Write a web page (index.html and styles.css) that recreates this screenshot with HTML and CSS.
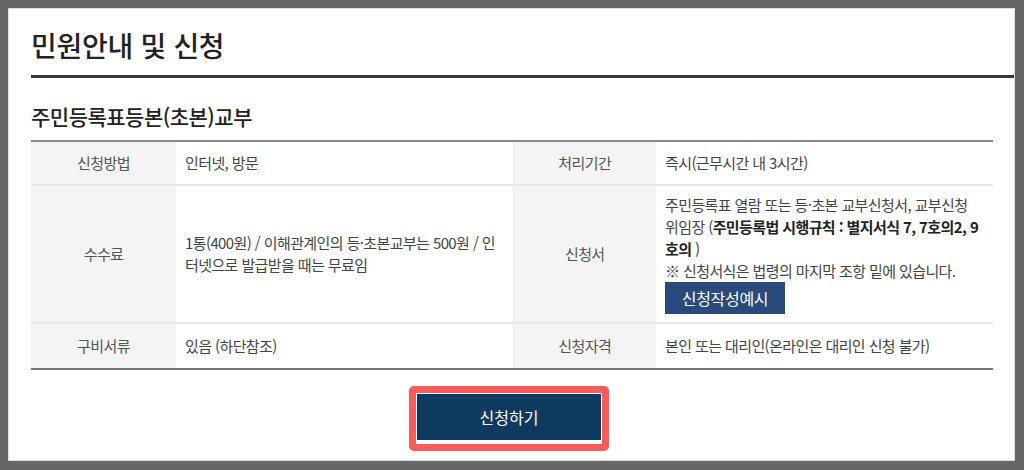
FILE: index.html
```html
<!DOCTYPE html>
<html lang="ko">
<head>
  <meta charset="UTF-8" />
  <meta name="viewport" content="width=device-width, initial-scale=1.0" />
  <title>민원안내 및 신청</title>
  <link rel="stylesheet" href="styles.css">
</head>
<body>
  <div class="panel">
    <h1 class="page-title">민원안내 및 신청</h1>

    <div class="content">
      <h2 class="service-title">주민등록표등본(초본)교부</h2>

      <table class="info-table">
        <colgroup>
          <col class="col-th" />
          <col class="col-td" />
          <col class="col-th2" />
          <col class="col-td" />
        </colgroup>
        <tr>
          <th>신청방법</th>
          <td>인터넷, 방문</td>
          <th>처리기간</th>
          <td>즉시(근무시간 내 3시간)</td>
        </tr>
        <tr>
          <th>수수료</th>
          <td>1통(400원) / 이해관계인의 등·초본교부는 500원 / 인터넷으로 발급받을 때는 무료임</td>
          <th>신청서</th>
          <td class="form-cell">
            주민등록표 열람 또는 등·초본 교부신청서, 교부신청 위임장 (<b>주민등록법 시행규칙 : 별지서식 7, 7호의2, 9호의</b> )<br />
            ※ 신청서식은 법령의 마지막 조항 밑에 있습니다.
            <button class="example-btn">신청작성예시</button>
          </td>
        </tr>
        <tr>
          <th>구비서류</th>
          <td>있음 (하단참조)</td>
          <th>신청자격</th>
          <td>본인 또는 대리인(온라인은 대리인 신청 불가)</td>
        </tr>
      </table>

      <div class="actions">
        <div class="highlight">
          <button class="apply-btn">신청하기</button>
        </div>
      </div>
    </div>
  </div>
</body>
</html>
```

FILE: styles.css
```css
body {
  margin: 0;
  padding: 8px 9px 9px 8px;
  background-color: #666;
  font-family: "Noto Sans CJK KR", "Noto Sans", sans-serif;
  color: #444;
}
.panel {
  background-color: #fff;
  height: 453px;
  box-sizing: border-box;
  border: 1px solid #ddd;
  padding-left: 22px;
  overflow: hidden;
}
.page-title {
  margin: 16px 0 0;
  font-size: 28px;
  font-weight: 500;
  line-height: 40px;
  color: #222;
  padding-bottom: 10px;
  border-bottom: 3px solid #383838;
  letter-spacing: -0.3px;
}
.content {
  padding-right: 21px;
}
.service-title {
  margin: 23px 0 9px;
  font-size: 21px;
  font-weight: 500;
  line-height: 30px;
  color: #222;
  letter-spacing: -0.5px;
}
.info-table {
  width: 100%;
  table-layout: fixed;
  border-collapse: collapse;
  border-top: 2px solid #888;
  border-bottom: 2px solid #777;
  font-size: 15px;
  line-height: 22px;
  letter-spacing: -0.6px;
  word-break: break-all;
}
.col-th {
  width: 145px;
}
.col-th2 {
  width: 143px;
}
.info-table th,
.info-table td {
  border-top: 2px solid #e8e8e8;
  padding: 0 9px;
  vertical-align: middle;
}
.info-table tr:first-child th,
.info-table tr:first-child td {
  border-top: none;
}
.info-table tr:first-child {
  height: 44px;
}
.info-table tr:last-child {
  height: 46px;
}
.info-table th {
  background-color: #f4f4f4;
  font-weight: 400;
  color: #555;
  text-align: center;
}
.info-table td {
  text-align: left;
  color: #444;
}
.info-table td + th {
  border-left: 1px solid #e8e8e8;
}
.info-table b {
  color: #222;
}
.form-cell {
  padding-top: 8px !important;
  padding-bottom: 8px !important;
}
.example-btn {
  display: block;
  width: 120px;
  height: 32px;
  padding: 0;
  background-color: #2a4a7c;
  color: #fff;
  border: none;
  font-family: inherit;
  font-size: 16px;
  letter-spacing: -0.3px;
}
.actions {
  display: flex;
  justify-content: center;
  margin-top: 16px;
}
.highlight {
  border: 7px solid #f75b5b;
  border-radius: 5px;
  padding: 1px 1px 4px;
  margin-right: 6px;
}
.apply-btn {
  display: block;
  width: 184px;
  height: 46px;
  background-color: #0e3a62;
  color: #fff;
  border: none;
  font-family: inherit;
  font-size: 16px;
}
```
